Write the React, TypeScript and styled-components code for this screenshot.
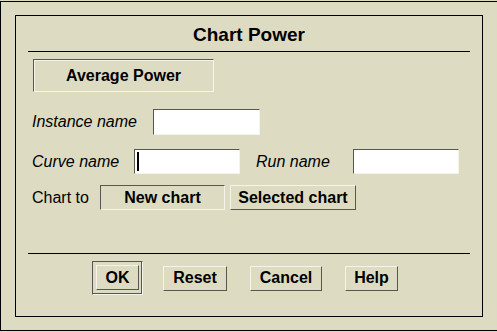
import styled, { createGlobalStyle, css } from "styled-components";

const GlobalStyle = createGlobalStyle`
  html, body {
    margin: 0;
    padding: 0;
    background: #dddcc3;
  }
  * {
    box-sizing: border-box;
  }
`;

const DARK = "#57574d";
const LIGHT = "#f6f4ea";

const bevel = (sunken: boolean) => css`
  border: 1px solid;
  border-color: ${sunken
    ? `${DARK} ${LIGHT} ${LIGHT} ${DARK}`
    : `${LIGHT} ${DARK} ${DARK} ${LIGHT}`};
`;

const Window = styled.div`
  width: 497px;
  height: 332px;
  padding: 14px;
  margin-top: 1px;
  border-top: 1px solid #000;
  border-bottom: 1px solid #000;
  border-left: 1px solid #000;
  background: #dddcc3;
  font-family: "Liberation Sans", Arial, sans-serif;
  color: #000;
  height: 330px;
`;

const Panel = styled.div`
  width: 468px;
  height: 302px;
  margin-top: -1px;
  border: 1px solid #000;
  display: flex;
  flex-direction: column;
`;

const Title = styled.div`
  margin-top: 8px;
  height: 22px;
  line-height: 22px;
  font-size: 19px;
  font-weight: bold;
  text-align: center;
`;

const Separator = styled.div<{ $top: number }>`
  margin: ${(p) => p.$top}px 12px 0 12px;
  height: 1px;
  background: #000;
`;

const StateBox = styled.div`
  ${bevel(true)}
  box-shadow: inset 1px 1px 0 ${LIGHT};
  margin: 7px 0 0 17px;
  width: 181px;
  height: 33px;
  display: flex;
  align-items: center;
  justify-content: center;
  font-size: 16px;
  font-weight: bold;
`;

const Row = styled.div<{ $top: number; $h: number }>`
  display: flex;
  align-items: center;
  margin-top: ${(p) => p.$top}px;
  height: ${(p) => p.$h}px;
  padding-left: 16px;
`;

const Label = styled.span<{ $w: number; $italic?: boolean; $left?: number }>`
  width: ${(p) => p.$w}px;
  margin-left: ${(p) => p.$left ?? 0}px;
  font-size: 16px;
  font-style: ${(p) => (p.$italic ? "italic" : "normal")};
  white-space: nowrap;
`;

const Field = styled.div<{ $w: number }>`
  ${bevel(true)}
  width: ${(p) => p.$w}px;
  height: 100%;
  background: #fff;
  display: flex;
  align-items: center;
  padding-left: 2px;
`;

const Caret = styled.span`
  width: 2px;
  height: 19px;
  background: #000;
`;

const Option = styled.div<{ $w: number; $sunken?: boolean; $left?: number }>`
  ${(p) => bevel(!!p.$sunken)}
  width: ${(p) => p.$w}px;
  height: 100%;
  margin-left: ${(p) => p.$left ?? 0}px;
  display: flex;
  align-items: center;
  justify-content: center;
  font-size: 16px;
  font-weight: bold;
  white-space: nowrap;
`;

const ButtonRow = styled.div`
  display: flex;
  align-items: center;
  margin-top: 7px;
  padding-left: 76px;
  height: 34px;
`;

const DefaultRing = styled.div`
  ${bevel(true)}
  box-shadow: inset -1px -1px 0 ${DARK};
  width: 51px;
  height: 34px;
  padding: 3px;
  display: flex;
`;

const Button = styled.div<{ $w?: number; $left?: number }>`
  ${bevel(false)}
  width: ${(p) => (p.$w ? `${p.$w}px` : "100%")};
  height: 25px;
  margin-left: ${(p) => p.$left ?? 0}px;
  display: flex;
  align-items: center;
  justify-content: center;
  font-size: 16px;
  font-weight: bold;
`;

export default function App() {
  return (
    <>
      <GlobalStyle />
      <Window>
        <Panel>
          <Title>Chart Power</Title>
          <Separator $top={5} />
          <StateBox>Average Power</StateBox>

          <Row $top={17} $h={26}>
            <Label $w={121} $italic>
              Instance name
            </Label>
            <Field $w={107} />
          </Row>

          <Row $top={14} $h={25}>
            <Label $w={102} $italic>
              Curve name
            </Label>
            <Field $w={106}>
              <Caret />
            </Field>
            <Label $w={97} $italic $left={16}>
              Run name
            </Label>
            <Field $w={106} />
          </Row>

          <Row $top={11} $h={25}>
            <Label $w={68}>Chart to</Label>
            <Option $w={125} $sunken>
              New chart
            </Option>
            <Option $w={126} $left={5}>
              Selected chart
            </Option>
          </Row>

          <Separator $top={43} />

          <ButtonRow>
            <DefaultRing>
              <Button>OK</Button>
            </DefaultRing>
            <Button $w={64} $left={20}>
              Reset
            </Button>
            <Button $w={72} $left={23}>
              Cancel
            </Button>
            <Button $w={53} $left={23}>
              Help
            </Button>
          </ButtonRow>
        </Panel>
      </Window>
    </>
  );
}
